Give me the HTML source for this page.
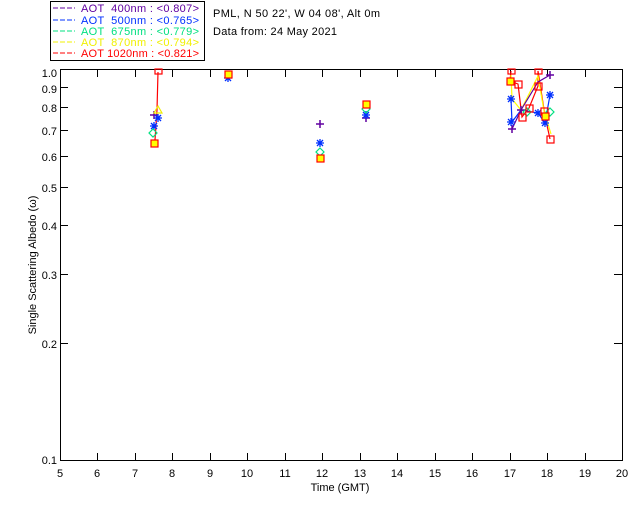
<!DOCTYPE html>
<html><head><meta charset="utf-8"><style>
html,body{margin:0;padding:0;background:#fff;width:640px;height:512px;overflow:hidden}
svg{display:block}
text{font-family:"Liberation Sans",sans-serif;font-size:11px}
</style></head><body>
<svg width="640" height="512" viewBox="0 0 640 512" xmlns="http://www.w3.org/2000/svg">
<defs>
<path id="st" d="M-4 0h8M0 -4v8M-3 -3l6 6M-3 3l6 -6" stroke="#0030ff" stroke-width="1.3" fill="none"/>
<path id="pl" d="M-4 0h8M0 -4v8" stroke="#6000a0" stroke-width="1.5" fill="none"/>
<path id="dm" d="M0 -4l4 4l-4 4l-4 -4z" stroke="#00e080" stroke-width="1.2" fill="none"/>
</defs>
<rect x="50.5" y="1.5" width="154" height="59" fill="#fff" stroke="#000" stroke-width="1"/>
<g font-size="10.5">
<line x1="53" y1="8" x2="75" y2="8" stroke="#6000a0" stroke-dasharray="5,2"/><text x="81" y="12" fill="#6000a0" xml:space="preserve" textLength="118">AOT  400nm : &lt;0.807&gt;</text>
<line x1="53" y1="20" x2="75" y2="20" stroke="#0030ff" stroke-dasharray="5,2"/><text x="81" y="24" fill="#0030ff" xml:space="preserve" textLength="118">AOT  500nm : &lt;0.765&gt;</text>
<line x1="53" y1="31" x2="75" y2="31" stroke="#00e080" stroke-dasharray="5,2"/><text x="81" y="35" fill="#00e080" xml:space="preserve" textLength="118">AOT  675nm : &lt;0.779&gt;</text>
<line x1="53" y1="42" x2="75" y2="42" stroke="#f0f000" stroke-dasharray="5,2"/><text x="81" y="46" fill="#f0f000" xml:space="preserve" textLength="118">AOT  870nm : &lt;0.794&gt;</text>
<line x1="53" y1="53" x2="75" y2="53" stroke="#ff0000" stroke-dasharray="5,2"/><text x="81" y="57" fill="#ff0000" xml:space="preserve" textLength="118">AOT 1020nm : &lt;0.821&gt;</text>
</g>
<text x="213" y="17" textLength="167">PML, N 50 22', W 04 08', Alt 0m</text>
<text x="213" y="35" textLength="124">Data from: 24 May 2021</text>
<rect x="60.5" y="69.5" width="562" height="391" fill="none" stroke="#000"/>
<g stroke="#000">
<path d="M97.5 461v-8M135.5 461v-8M172.5 461v-8M210.5 461v-8M247.5 461v-8M285.5 461v-8M322.5 461v-8M360.5 461v-8M397.5 461v-8M435.5 461v-8M472.5 461v-8M510.5 461v-8M547.5 461v-8M585.5 461v-8"/>
<path d="M97.5 69v8M135.5 69v8M172.5 69v8M210.5 69v8M247.5 69v8M285.5 69v8M322.5 69v8M360.5 69v8M397.5 69v8M435.5 69v8M472.5 69v8M510.5 69v8M547.5 69v8M585.5 69v8"/>
<path d="M60 87.5h8M60 107.5h8M60 130.5h8M60 156.5h8M60 187.5h8M60 225.5h8M60 274.5h8M60 343.5h8"/>
<path d="M622 87.5h-8M622 107.5h-8M622 130.5h-8M622 156.5h-8M622 187.5h-8M622 225.5h-8M622 274.5h-8M622 343.5h-8"/>
</g>
<g font-size="10.5" text-anchor="end">
<text x="57" y="77">1.0</text><text x="57" y="93">0.9</text><text x="57" y="112">0.8</text><text x="57" y="135">0.7</text><text x="57" y="161">0.6</text><text x="57" y="192">0.5</text><text x="57" y="230">0.4</text><text x="57" y="279">0.3</text><text x="57" y="348">0.2</text><text x="57" y="464">0.1</text>
</g>
<g font-size="10.5" text-anchor="middle">
<text x="60" y="477">5</text><text x="97" y="477">6</text><text x="135" y="477">7</text><text x="172" y="477">8</text><text x="210" y="477">9</text><text x="247" y="477">10</text><text x="285" y="477">11</text><text x="322" y="477">12</text><text x="360" y="477">13</text><text x="397" y="477">14</text><text x="435" y="477">15</text><text x="472" y="477">16</text><text x="510" y="477">17</text><text x="547" y="477">18</text><text x="585" y="477">19</text><text x="622" y="477">20</text>
<text x="340" y="491">Time (GMT)</text>
</g>
<text x="36" y="265" font-size="10.5" text-anchor="middle" transform="rotate(-90 36 265)">Single Scattering Albedo (ω)</text>
<g fill="none" stroke-width="1.2">
<path d="M158 72 L157 110 L155 140" stroke="#f00"/>
<path d="M511 71 L510 81 L518 84 L522 117 L529 108 L538 86 L538 71 L545 116 L550 139" stroke="#f00"/>
<path d="M511 75 L512 99 L521 110 L538 76 L544 111 L551 134" stroke="#ff0"/>
<path d="M511 99 L512 122 L521 110 L538 113 L545 123 L550 95" stroke="#0030ff"/>
<path d="M512 129 L521 110 L538 82 L550 75" stroke="#6000a0"/>
</g>
<use href="#pl" x="154" y="115"/><use href="#pl" x="512" y="129"/><use href="#pl" x="550" y="75"/><use href="#pl" x="320" y="124"/><use href="#pl" x="366" y="118"/><use href="#pl" x="521" y="110"/>
<use href="#st" x="154" y="126"/><use href="#st" x="158" y="118"/><use href="#st" x="228" y="78"/><use href="#st" x="320" y="143"/><use href="#st" x="366" y="115"/><use href="#st" x="511" y="99"/><use href="#st" x="511" y="122"/><use href="#st" x="538" y="113"/><use href="#st" x="545" y="123"/><use href="#st" x="550" y="95"/>
<use href="#dm" x="153" y="133"/><use href="#dm" x="320" y="152"/><use href="#dm" x="527" y="112"/><use href="#dm" x="550" y="112"/><use href="#dm" x="366" y="109"/>
<path d="M158 106l4 7h-8z" fill="none" stroke="#ee0" stroke-width="1.2"/>
<g fill="none" stroke="#f00" stroke-width="1.2">
<rect x="151" y="140" width="7" height="7" fill="#ff0"/><rect x="155" y="69" width="7" height="5"/>
<rect x="225" y="71" width="7" height="7" fill="#ff0"/><rect x="317" y="155" width="7" height="7" fill="#ff0"/><rect x="363" y="101" width="7" height="7" fill="#ff0"/>
<rect x="508" y="69" width="7" height="5"/><rect x="507" y="78" width="7" height="7" fill="#ff0"/><rect x="515" y="81" width="7" height="7"/><rect x="519" y="114" width="7" height="7"/><rect x="526" y="105" width="7" height="7"/><rect x="535" y="69" width="7" height="5"/><rect x="535" y="83" width="7" height="7"/><rect x="541" y="108" width="7" height="7"/><rect x="542" y="113" width="7" height="7" fill="#ff0"/><rect x="547" y="136" width="7" height="7"/>
</g>
</svg>
</body></html>
